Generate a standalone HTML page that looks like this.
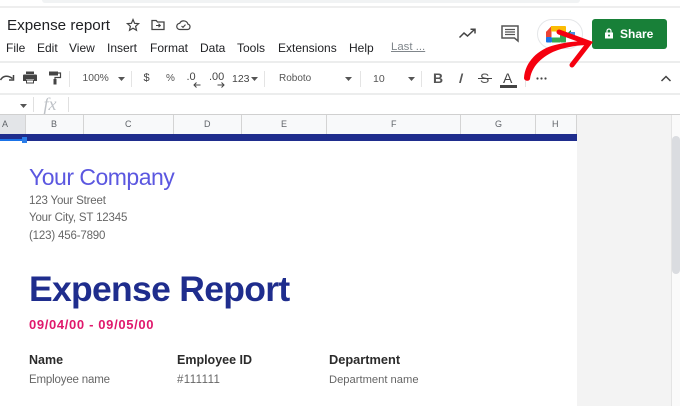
<!DOCTYPE html>
<html><head><meta charset="utf-8"><style>
html,body{margin:0;padding:0;background:#fff}
#p{position:relative;width:680px;height:406px;overflow:hidden;background:#fff;font-family:"Liberation Sans",sans-serif;color:#3c4043}
.t{position:absolute;white-space:nowrap;line-height:1}
.b{position:absolute}
svg{position:absolute;overflow:visible}
.m{top:42px;font-size:12px;color:#202124}
.tb{top:73.500px;font-size:10px;color:#555}
.s{top:71px;width:1px;height:16px;background:#e4e4e4;position:absolute}
.h{top:115px;width:1px;height:19px;background:#d4d4d4;position:absolute}
.c{top:120px;font-size:9px;color:#5f6368}
.a{font-size:11.500px;color:#666;letter-spacing:-.17px}
</style></head><body><div id="p">
<div class="b" style="left:42px;top:0;width:538px;height:3px;background:#f1f3f4;border-radius:0 0 6px 6px"></div>
<div class="b" style="left:0;top:6px;width:680px;height:2px;background:#eeeeee"></div>
<div class="t" style="left:7px;top:18px;font-size:15.200px;color:#202124">Expense report</div>
<svg style="left:126px;top:18px" width="14" height="14" viewBox="0 0 14 14"><path d="M7 1.500l1.600 3.800 4 .3-3 2.700.9 4L7 10.200l-3.500 2.100.9-4-3-2.700 4-.3z" fill="none" stroke="#444" stroke-width="1.200"/></svg>
<svg style="left:151px;top:19px" width="14" height="12" viewBox="0 0 14 12"><path d="M1 2.500V10.500H13V3H6.500L5.200 1.500H1z" fill="none" stroke="#444" stroke-width="1.300"/><path d="M5 6.500H9M7.500 4.800L9.300 6.500 7.500 8.200" fill="none" stroke="#444" stroke-width="1.100"/></svg>
<svg style="left:176px;top:19px" width="15" height="12" viewBox="0 0 15 12"><path d="M4 10.500H11.500A2.700 2.700 0 0 0 12 5.200 4.500 4.500 0 0 0 3.700 4.300 3.100 3.100 0 0 0 4 10.500z" fill="none" stroke="#444" stroke-width="1.200"/><path d="M5.500 7L7 8.300 9.500 5.600" fill="none" stroke="#444" stroke-width="1.100"/></svg>

<div class="t m" style="left:6px">File</div>
<div class="t m" style="left:37px">Edit</div>
<div class="t m" style="left:69px">View</div>
<div class="t m" style="left:107px">Insert</div>
<div class="t m" style="left:150px">Format</div>
<div class="t m" style="left:200px">Data</div>
<div class="t m" style="left:237px">Tools</div>
<div class="t m" style="left:278px">Extensions</div>
<div class="t m" style="left:349px">Help</div>
<div class="t m" style="left:391px;color:#80868b;text-decoration:underline;font-size:11.400px">Last ...</div>

<svg style="left:459px;top:28px" width="18" height="12" viewBox="0 0 18 12"><path d="M0.500 9.500L5 5 8.500 8 15.500 1.500M11.500 1.200H16V5.500" fill="none" stroke="#444" stroke-width="1.500"/></svg>
<svg style="left:501px;top:25px" width="18" height="17" viewBox="0 0 18 17"><path d="M1 1H17V16L13.500 13H1z" fill="none" stroke="#555" stroke-width="1.500"/><path d="M4 4.500H14M4 7H14M4 9.500H14" stroke="#555" stroke-width="1.200"/></svg>

<div class="b" style="left:537px;top:19px;width:44px;height:28px;border:1px solid #e4e6e8;border-radius:15px"></div>
<svg style="left:546px;top:26px" width="30" height="17" viewBox="0 0 30 17">
<path d="M0 6L5 0.500H6V6z" fill="#ea4335"/><rect x="0" y="5.500" width="5.500" height="6" fill="#ea4335"/>
<rect x="5" y="0" width="11" height="5.500" fill="#fbbc04"/><rect x="15" y="0" width="5" height="8" rx="1" fill="#fbbc04"/>
<rect x="0" y="11" width="6" height="5.500" rx="1" fill="#1a73e8"/><rect x="6" y="11.500" width="8" height="5" fill="#34a853"/><rect x="14" y="8" width="6" height="8.500" rx="1" fill="#34a853"/>
<rect x="5.500" y="5.500" width="8.500" height="6" fill="#fff"/>
<path d="M20 8.500L25 4V13z" fill="#1e8e3e"/><rect x="24" y="6" width="5" height="4" fill="#4a90e2"/>
</svg>

<div class="b" style="left:592px;top:19px;width:75px;height:30px;background:#188038;border-radius:3px"></div>
<svg style="left:603.500px;top:28px" width="10" height="11" viewBox="0 0 10 11"><path d="M1 4.500H9V10.500H1z" fill="#fff"/><path d="M3 4.500V3A2 2 0 0 1 7 3V4.500" fill="none" stroke="#fff" stroke-width="1.200"/><circle cx="5" cy="7.500" r="1" fill="#188038"/></svg>
<div class="t" style="left:620px;top:27.500px;font-size:12px;font-weight:bold;color:#fff">Share</div>

<div class="b" style="left:0;top:61px;width:680px;height:2px;background:#eceded"></div>
<svg style="left:0;top:73px" width="15" height="10" viewBox="0 0 15 10"><path d="M0.500 7C3 2.500 8 2 12.500 5.500M13.500 2V7H9" fill="none" stroke="#444" stroke-width="1.500"/></svg>
<svg style="left:23px;top:71px" width="14" height="13" viewBox="0 0 14 13"><path d="M3 0.500H11V3H3z" fill="#444"/><path d="M0 4.500Q0 3.500 1 3.500H13Q14 3.500 14 4.500V10H11V8H3V10H0z" fill="#444"/><path d="M3 8.500H11V12.500H3z" fill="#444"/><path d="M4 9.500H10V11.500H4z" fill="#fff"/></svg>
<svg style="left:49px;top:71px" width="12" height="14" viewBox="0 0 12 14"><path d="M0 0.500H9V4.500H0z" fill="#444"/><path d="M9 2H11.500V6.500H6V8" fill="none" stroke="#444" stroke-width="1.200"/><path d="M4.500 8H7.500V13.500H4.500z" fill="#444"/></svg>
<div class="s" style="left:69px"></div>
<div class="t tb" style="left:82.500px;font-size:10.300px">100%</div>
<svg style="left:118px;top:77px" width="8" height="4"><path d="M0 0H7L3.500 4z" fill="#555"/></svg>
<div class="s" style="left:131px"></div>
<div class="t" style="left:143.500px;top:72.500px;font-size:11px;color:#444">$</div>
<div class="t tb" style="left:166px">%</div>
<div class="t" style="left:186.500px;top:72px;font-size:11px;color:#444">.0</div>
<svg style="left:193px;top:81.500px" width="8" height="6"><path d="M7.500 3H1M3.500 0.500L1 3 3.500 5.500" fill="none" stroke="#444" stroke-width="1"/></svg>
<div class="t" style="left:209px;top:72px;font-size:11px;color:#444">.00</div>
<svg style="left:217px;top:81.500px" width="8" height="6"><path d="M0.500 3H7M4.500 0.500L7 3 4.500 5.500" fill="none" stroke="#444" stroke-width="1"/></svg>
<div class="t tb" style="left:232px;font-size:10.500px;color:#444">123</div>
<svg style="left:251px;top:77px" width="8" height="4"><path d="M0 0H7L3.500 4z" fill="#555"/></svg>
<div class="s" style="left:264px"></div>
<div class="t tb" style="left:279px">Roboto</div>
<svg style="left:345px;top:77px" width="8" height="4"><path d="M0 0H7L3.500 4z" fill="#555"/></svg>
<div class="s" style="left:360px"></div>
<div class="t tb" style="left:373px;font-size:10.500px">10</div>
<svg style="left:408px;top:77px" width="8" height="4"><path d="M0 0H7L3.500 4z" fill="#555"/></svg>
<div class="s" style="left:421px"></div>
<div class="t" style="left:433px;top:71px;font-size:14px;font-weight:bold;color:#555">B</div>
<div class="t" style="left:459px;top:71px;font-size:14px;font-style:italic;color:#555;transform:scaleX(1.300)">I</div>
<div class="t" style="left:480px;top:71px;font-size:14px;color:#555">S</div>
<div class="b" style="left:478px;top:77.500px;width:14px;height:1px;background:#444"></div>
<div class="t" style="left:503px;top:71px;font-size:14px;color:#444">A</div>
<div class="b" style="left:500px;top:85px;width:17px;height:3px;background:#444"></div>
<div class="s" style="left:525px"></div>
<svg style="left:536px;top:77px" width="12" height="3"><circle cx="1.500" cy="1.500" r="1.100" fill="#444"/><circle cx="5.500" cy="1.500" r="1.100" fill="#444"/><circle cx="9.500" cy="1.500" r="1.100" fill="#444"/></svg>
<svg style="left:661px;top:75px" width="10" height="7"><path d="M0.500 6L5 1.500 9.500 6" fill="none" stroke="#444" stroke-width="1.500"/></svg>

<div class="b" style="left:0;top:93px;width:680px;height:2px;background:#eceded"></div>
<svg style="left:20px;top:104px" width="8" height="4"><path d="M0 0H7L3.500 4z" fill="#555"/></svg>
<div class="b" style="left:33px;top:97px;width:1px;height:15px;background:#e0e0e0"></div>
<div class="t" style="left:43.500px;top:94.500px;font-family:'Liberation Serif',serif;font-style:italic;font-size:18px;color:#bdc1c6">fx</div>
<div class="b" style="left:68px;top:97px;width:1px;height:15px;background:#e0e0e0"></div>

<!-- column headers -->
<div class="b" style="left:0;top:114px;width:680px;height:1px;background:#d0d0d0"></div>
<div class="b" style="left:0;top:115px;width:577px;height:19px;background:#f8f9fa"></div>
<div class="b" style="left:0;top:115px;width:26px;height:19px;background:#e3e5e8"></div>
<div class="h" style="left:25px"></div>
<div class="h" style="left:83px"></div>
<div class="h" style="left:173px"></div>
<div class="h" style="left:241px"></div>
<div class="h" style="left:326px"></div>
<div class="h" style="left:460px"></div>
<div class="h" style="left:535px"></div>
<div class="t c" style="left:2px">A</div>
<div class="t c" style="left:51px">B</div>
<div class="t c" style="left:125px">C</div>
<div class="t c" style="left:204px">D</div>
<div class="t c" style="left:281px">E</div>
<div class="t c" style="left:391px">F</div>
<div class="t c" style="left:495px">G</div>
<div class="t c" style="left:552px">H</div>

<div class="b" style="left:0;top:134px;width:577px;height:7px;background:#1f2d8d"></div>
<div class="b" style="left:0;top:139px;width:23px;height:2px;background:#1a73e8"></div>
<div class="b" style="left:22px;top:137px;width:5px;height:6px;background:#2b7de9"></div>

<!-- right gutter -->
<div class="b" style="left:577px;top:115px;width:94px;height:291px;background:#f3f3f3"></div>
<div class="b" style="left:576px;top:115px;width:1px;height:19px;background:#d4d4d4"></div>
<div class="b" style="left:671px;top:115px;width:9px;height:291px;background:#fafafa;border-left:1px solid #e4e4e4;box-sizing:border-box"></div>
<div class="b" style="left:672px;top:136px;width:8px;height:138px;background:#dadce0;border-radius:4px"></div>

<!-- document -->
<div class="t" style="left:29px;top:165.500px;font-size:23px;letter-spacing:-.5px;color:#5b57e0">Your Company</div>
<div class="t a" style="left:29px;top:195.500px">123 Your Street</div>
<div class="t a" style="left:29px;top:213px">Your City, ST 12345</div>
<div class="t a" style="left:29px;top:230.500px">(123) 456-7890</div>
<div class="t" style="left:29px;top:272px;font-size:35.500px;letter-spacing:-.7px;font-weight:bold;color:#1f2d8d">Expense Report</div>
<div class="t" style="left:29px;top:318px;font-size:13px;font-weight:bold;color:#e0186c;letter-spacing:.65px">09/04/00 - 09/05/00</div>
<div class="t" style="left:29px;top:354px;font-size:12.500px;font-weight:bold;color:#2b2b2b">Name</div>
<div class="t" style="left:177px;top:354px;font-size:12.500px;font-weight:bold;color:#2b2b2b">Employee ID</div>
<div class="t" style="left:329px;top:354px;font-size:12.800px;font-weight:bold;color:#2b2b2b">Department</div>
<div class="t a" style="left:29px;top:375px">Employee name</div>
<div class="t a" style="left:177px;top:375px;letter-spacing:.4px">#111111</div>
<div class="t a" style="left:329px;top:375px;font-size:11.200px;letter-spacing:0">Department name</div>

<!-- red arrow -->
<svg style="left:0;top:0" width="680" height="406" viewBox="0 0 680 406">
<path d="M524 78C525 62 538 49 555 45C566 42 578 41 589 41L589 45C578 45 567 47 558 50C546 54 532 64 530 79C529 82 524 81 524 78z" fill="#f5000f"/>
<path d="M559 32L589 43 572 65" fill="none" stroke="#f5000f" stroke-width="5" stroke-linecap="round" stroke-linejoin="miter"/>
</svg>
</div></body></html>
